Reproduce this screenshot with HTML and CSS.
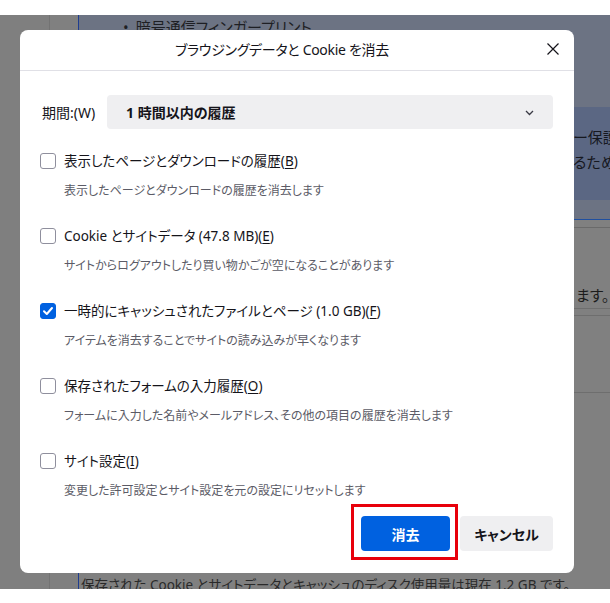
FILE: index.html
```html
<!DOCTYPE html>
<html lang="ja">
<head>
<meta charset="utf-8">
<title>ブラウジングデータと Cookie を消去</title>
<link rel="stylesheet" href="styles.css">
</head>
<body>
<div class="backdrop">
  <div class="side"></div>
  <div class="sideline"></div>
  <div class="gutter"></div>
  <div class="content">
    <div class="highlight">
      <div class="hl-top"><span class="bullet">•</span>暗号通信フィンガープリント</div>
      <div class="hl-box">
        <div class="hl-line1">ー保護</div>
        <div class="hl-line2">るため、</div>
      </div>
    </div>
    <div class="plain">
      <div class="gap1"></div>
      <div class="p-text">ます。</div>
      <div class="rule r1"></div>
      <div class="rule r2"></div>
      <div class="gap2"></div>
      <div class="rule r3"></div>
      <div class="fill"></div>
      <div class="bottom-text">保存された Cookie とサイトデータとキャッシュのディスク使用量は現在 1.2 GB です。</div>
    </div>
  </div>
</div>

<div class="dialog">
  <div class="header">
    <div class="title">ブラウジングデータと Cookie を消去</div>
    <div class="close">
      <svg width="12" height="12" viewBox="0 0 12 12"><path d="M0.5 0.5 L11.5 11.5 M11.5 0.5 L0.5 11.5" stroke="#15141a" stroke-width="1.2" fill="none"/></svg>
    </div>
  </div>
  <div class="body">
    <div class="period">
      <span class="period-label">期間:(W)</span>
      <div class="select">
        <span class="select-text">1 時間以内の履歴</span>
        <svg class="chev" width="9" height="6" viewBox="0 0 9 6"><path d="M1 1 L4.5 4.5 L8 1" stroke="#3a3a44" stroke-width="1.3" fill="none"/></svg>
      </div>
    </div>

    <div class="row">
      <div class="line"><span class="cb"></span><span class="label">表示したページとダウンロードの履歴(<u>B</u>)</span></div>
      <div class="desc">表示したページとダウンロードの履歴を消去します</div>
    </div>
    <div class="row">
      <div class="line"><span class="cb"></span><span class="label">Cookie とサイトデータ (47.8 MB)(<u>E</u>)</span></div>
      <div class="desc">サイトからログアウトしたり買い物かごが空になることがあります</div>
    </div>
    <div class="row">
      <div class="line"><span class="cb checked"><svg width="16" height="16" viewBox="0 0 16 16"><path d="M4 8.3 L6.8 11 L12 5" stroke="#fff" stroke-width="2" fill="none" stroke-linecap="round" stroke-linejoin="round"/></svg></span><span class="label">一時的にキャッシュされたファイルとページ (1.0 GB)(<u>F</u>)</span></div>
      <div class="desc">アイテムを消去することでサイトの読み込みが早くなります</div>
    </div>
    <div class="row">
      <div class="line"><span class="cb"></span><span class="label">保存されたフォームの入力履歴(<u>O</u>)</span></div>
      <div class="desc">フォームに入力した名前やメールアドレス、その他の項目の履歴を消去します</div>
    </div>
    <div class="row">
      <div class="line"><span class="cb"></span><span class="label">サイト設定(<u>I</u>)</span></div>
      <div class="desc">変更した許可設定とサイト設定を元の設定にリセットします</div>
    </div>

    <div class="buttons">
      <span class="mark"><button class="btn primary">消去</button></span>
      <button class="btn secondary">キャンセル</button>
    </div>
  </div>
</div>
</body>
</html>
```

FILE: styles.css
```css
* { box-sizing: border-box; }
html, body { margin: 0; padding: 0; }
body {
  width: 610px;
  height: 603px;
  background: #ffffff;
  font-family: "Noto Sans", "Noto Sans CJK JP", sans-serif;
  font-feature-settings: "palt";
  color: #15141a;
  overflow: hidden;
  position: relative;
}

.backdrop {
  margin-top: 15px;
  height: 574px;
  display: flex;
  background: #808080;
  overflow: hidden;
}
.side { flex: none; width: 49px; background: #7f7f7f; }
.sideline { flex: none; width: 1px; background: #737373; }
.gutter { flex: none; width: 29px; background: #808080; border-right: 1px solid #1f3d8f; }
.content { flex: 1; min-width: 0; display: flex; flex-direction: column; overflow: hidden; }

.highlight {
  height: 205px;
  background: #6c7383;
  border-bottom: 1px solid #1f4fa0;
  display: flex;
  flex-direction: column;
}
.hl-top {
  font-size: 15px;
  line-height: 20px;
  padding-left: 44px;
  color: #1e1f24;
  margin-top: 2px;
  height: 75px;
  white-space: nowrap;
}
.bullet { margin-right: 7px; }
.hl-box {
  margin-top: 15px;
  height: 93px;
  background: #5b6783;
  padding-left: 494px;
  padding-top: 18px;
  font-size: 15px;
  line-height: 25px;
  color: #16181f;
  white-space: nowrap;
}
.plain { flex: 1; display: flex; flex-direction: column; }
.gap1 { height: 57px; border-top: 1px solid #6a6a6a; margin-top: 7px; }
.p-text { padding-left: 497px; font-size: 15px; line-height: 22px; color: #1c1c1c; white-space: nowrap; height: 22px; }
.rule { height: 1px; background: #6e6e6e; }
.r1 { margin-top: 2px; }
.r2 { margin-top: 6px; }
.gap2 { height: 76px; }
.fill { flex: 1; }
.bottom-text {
  font-size: 13.5px;
  line-height: 20px;
  color: #2a2a2a;
  padding-left: 2px;
  height: 14px;
  white-space: nowrap;
}

.dialog {
  position: absolute;
  left: 20px;
  top: 30px;
  width: 554px;
  height: 543px;
  background: #ffffff;
  border-radius: 8px;
}
.header {
  height: 41px;
  border-bottom: 1px solid #e0e0e6;
  display: flex;
  align-items: center;
  justify-content: center;
  padding-right: 30px;
  position: relative;
}
.title { font-size: 14px; letter-spacing: -0.3px; line-height: 20px; color: #15141a; }
.close {
  position: absolute;
  right: 15px;
  top: 13px;
  width: 12px;
  height: 12px;
  display: flex;
}

.body { padding: 24px 21px 0 20px; }
.period { display: flex; align-items: center; height: 34px; }
.period-label { font-size: 14px; width: 67px; padding-left: 2px; color: #15141a; }
.select {
  flex: 1;
  height: 34px;
  background: #efeff1;
  border-radius: 4px;
  display: flex;
  align-items: center;
  justify-content: space-between;
  padding: 0 19px 0 19px;
}
.select-text { font-size: 14px; font-weight: 700; }
.chev { margin-top: 1px; }

.row { height: 75px; }
.period + .row { margin-top: 22px; }
.line { display: flex; align-items: center; height: 20px; }
.cb {
  width: 16px;
  height: 16px;
  border: 1px solid #8f8f9d;
  border-radius: 3px;
  margin-right: 8px;
  display: flex;
  flex: none;
}
.cb.checked { background: #0061e0; border-color: #0061e0; }
.cb.checked svg { margin: -1px; }
.label { font-size: 13.5px; line-height: 20px; color: #15141a; }
.label u { text-underline-offset: 2px; }
.desc {
  font-size: 12px;
  line-height: 18px;
  color: #5b5b66;
  padding-left: 24px;
  margin-top: 11px;
}

.buttons {
  display: flex;
  justify-content: flex-end;
  gap: 10px;
  margin-top: -10px;
}
.mark { position: relative; display: flex; }
.mark::after {
  content: "";
  position: absolute;
  left: -10px;
  top: -12px;
  right: -8px;
  bottom: -9px;
  border: 3px solid #e8000b;
}
.btn {
  height: 35px;
  border: none;
  border-radius: 4px;
  font-family: "Noto Sans", "Noto Sans CJK JP", sans-serif;
  font-feature-settings: "palt";
  font-size: 14px;
  font-weight: 700;
  padding: 0;
}
.primary { width: 89px; background: #0061e0; color: #ffffff; }
.secondary { width: 93px; background: #efeff1; color: #15141a; }
```
